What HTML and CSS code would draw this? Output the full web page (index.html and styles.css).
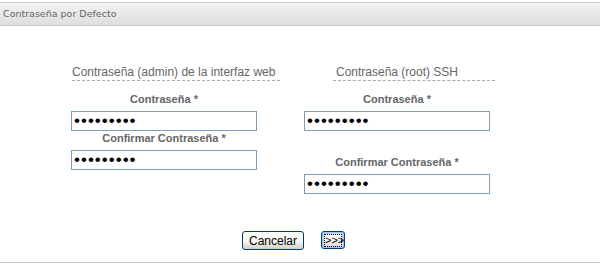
FILE: index.html
```html
<!DOCTYPE html>
<html lang="es">
<head>
  <meta charset="UTF-8">
  <title>Contraseña por Defecto</title>
  <link rel="stylesheet" href="styles.css">
</head>
<body>
  <div class="titlebar">Contraseña por Defecto</div>
  <main class="panes">
    <section class="pane pane-web">
      <h2 class="pane-title">Contraseña (admin) de la interfaz web</h2>
      <label class="field-label" for="web-pass">Contraseña *</label>
      <input class="field" type="password" id="web-pass" value="123456789">
      <label class="field-label" for="web-confirm">Confirmar Contraseña *</label>
      <input class="field" type="password" id="web-confirm" value="123456789">
    </section>
    <section class="pane pane-ssh">
      <h2 class="pane-title">Contraseña (root) SSH</h2>
      <label class="field-label" for="ssh-pass">Contraseña *</label>
      <input class="field" type="password" id="ssh-pass" value="123456789">
      <label class="field-label spaced" for="ssh-confirm">Confirmar Contraseña *</label>
      <input class="field" type="password" id="ssh-confirm" value="123456789">
    </section>
  </main>
  <div class="actions">
    <button type="button" class="btn btn-cancel">Cancelar</button>
    <button type="button" class="btn btn-next"><span>&gt;&gt;&gt;</span></button>
  </div>
</body>
</html>
```

FILE: styles.css
```css
* {
  margin: 0;
  padding: 0;
  box-sizing: border-box;
}
body {
  font-family: "Liberation Sans", Arial, sans-serif;
  background-color: #fff;
  padding-top: 2px;
}
.titlebar {
  height: 24px;
  border-top: 1px solid #cfcfcf;
  border-bottom: 1px solid #c6c6c6;
  background: linear-gradient(#f2f2f2, #dedede);
  color: #666;
  font-family: "DejaVu Sans", Verdana, sans-serif;
  font-size: 9.5px;
  line-height: 22px;
  padding-left: 3px;
}
.panes {
  display: flex;
  gap: 47px;
  padding-left: 71px;
  padding-top: 38px;
  height: 205px;
}
.pane {
  width: 186px;
  display: flex;
  flex-direction: column;
}
.pane-title {
  font-size: 12px;
  font-weight: normal;
  color: #666;
  line-height: 16px;
  height: 17px;
  white-space: nowrap;
  margin-bottom: 11px;
}
.pane-title::after {
  content: "";
  display: block;
  border-bottom: 1px dashed #aaa;
}
.pane-web .pane-title {
  margin-left: 1px;
}
.pane-web .pane-title::after {
  width: 208px;
}
.pane-ssh .pane-title {
  text-align: center;
}
.pane-ssh .pane-title::after {
  width: 162px;
  margin-left: 29px;
}
.field-label {
  display: block;
  text-align: center;
  font-size: 11px;
  font-weight: bold;
  color: #666;
  line-height: 14px;
  margin-bottom: 5px;
}
.field-label.spaced {
  margin-top: 24px;
}
.field {
  width: 186px;
  height: 20px;
  border: 1px solid #7f9db9;
  padding: 0 2px;
  font-family: "Liberation Sans", Arial, sans-serif;
  font-size: 17px;
  letter-spacing: 1px;
  color: #000;
  outline: none;
}
.actions {
  display: flex;
  justify-content: center;
  gap: 17px;
  padding-right: 13px;
  height: 32px;
  border-bottom: 1px solid #c8c8c8;
}
.btn {
  font-family: "Liberation Sans", Arial, sans-serif;
  font-size: 12px;
  color: #000;
  border: 1px solid #003c74;
  border-radius: 3px;
  background: linear-gradient(#fff, #f4f3ee 60%, #d6d0c5);
  height: 19px;
}
.btn-cancel {
  width: 62px;
}
.btn-next {
  width: 24px;
  height: 18px;
  font-size: 11px;
  box-shadow: inset 0 0 0 1px #a8c4ec, inset 0 0 0 2px #bcd2f2;
}
.btn-next span {
  display: block;
  border: 1px dotted #000;
  margin: 0 2px;
  line-height: 11px;
}
```
